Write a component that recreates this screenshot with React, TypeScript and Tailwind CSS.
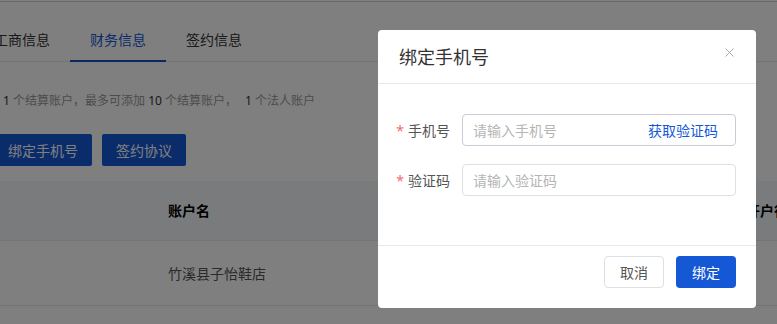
import { X } from 'lucide-react';

const font = { fontFamily: '"Noto Sans", "Noto Sans CJK SC", sans-serif' };

function Page() {
  return (
    <div className="w-[777px] h-[324px] bg-white overflow-hidden">
      <div className="h-[2px] border-b border-gray-300" />
      <div className="-ml-[26px] flex border-b border-[#e8e8e8] h-[60px]">
        {['工商信息', '财务信息', '签约信息'].map((t, i) => (
          <div
            key={t}
            className={
              'px-5 h-[60px] pt-[28px] text-[14px] leading-[20px] border-b-2 ' +
              (i === 1 ? 'text-[#1558d6] border-[#1a4fc0]' : 'text-[#333] border-transparent')
            }
          >
            {t}
          </div>
        ))}
      </div>
      <div className="pl-[3px] mt-[30px] text-[12px] text-[#999] leading-[18px]">
        <span className="text-[#333]">1</span> 个结算账户，最多可添加 <span className="text-[#333]">10</span> 个结算账户，
        <span className="text-[#333] ml-2">1</span> 个法人账户
      </div>
      <div className="-ml-[6px] mt-[24px] flex gap-[10px]">
        <button className="h-[32px] px-[14px] rounded-[2px] bg-[#1558d6] text-white text-[14px]">绑定手机号</button>
        <button className="h-[32px] px-[14px] rounded-[2px] bg-[#1558d6] text-white text-[14px]">签约协议</button>
      </div>
      <div className="mt-[15px]">
        <div className="flex h-[60px] items-center bg-[#f5f6f8] border-b border-[#e8e8e8] text-[14px] font-bold text-black">
          <div className="w-[168px] shrink-0" />
          <div className="w-[578px] shrink-0">账户名</div>
          <div className="shrink-0 whitespace-nowrap">开户行</div>
        </div>
        <div className="flex h-[65px] items-center border-b border-[#e8e8e8] text-[14px] text-[#555]">
          <div className="w-[168px] shrink-0" />
          <div className="w-[578px] shrink-0">竹溪县子怡鞋店</div>
        </div>
      </div>
    </div>
  );
}

function Modal() {
  return (
    <div className="absolute left-[378px] top-[30px] w-[378px] h-[278px] bg-white rounded-[4px] flex flex-col">
      <div className="h-[54px] border-b border-[#e8e8e8] flex items-center justify-between pl-[21px] pr-[19px]">
        <span className="text-[18px] text-[#333] pt-[2px]">绑定手机号</span>
        <X className="w-[15px] h-[15px] text-[#999] -mt-[8px]" strokeWidth={1.3} />
      </div>
      <div className="flex-1 pt-[30px] pr-[20px] flex flex-col gap-[18px]">
        <div className="flex items-center">
          <label className="w-[84px] text-right pr-[12px] text-[14px] text-[#555]">
            <span className="text-[#f56c6c] mr-[4px]">*</span>手机号
          </label>
          <div className="flex-1 h-[32px] border border-[#c9cbd6] rounded-[4px] flex items-center pl-[10px] pr-[17px] text-[14px]">
            <span className="flex-1 text-[#b5b5b5]">请输入手机号</span>
            <span className="text-[#1558d6]">获取验证码</span>
          </div>
        </div>
        <div className="flex items-center">
          <label className="w-[84px] text-right pr-[12px] text-[14px] text-[#555]">
            <span className="text-[#f56c6c] mr-[4px]">*</span>验证码
          </label>
          <div className="flex-1 h-[32px] border border-[#dcdfe6] rounded-[4px] flex items-center pl-[10px] text-[14px]">
            <span className="text-[#b5b5b5]">请输入验证码</span>
          </div>
        </div>
      </div>
      <div className="h-[63px] border-t border-[#e8e8e8] flex items-start justify-end gap-[12px] pt-[10px] pr-[20px]">
        <button className="h-[32px] w-[60px] border border-[#dcdfe6] rounded-[4px] text-[14px] text-[#555]">取消</button>
        <button className="h-[32px] w-[60px] rounded-[4px] bg-[#1558d6] text-[14px] text-white">绑定</button>
      </div>
    </div>
  );
}

export default function App() {
  return (
    <div className="relative w-[777px] h-[324px] overflow-hidden" style={font}>
      <Page />
      <div className="absolute inset-0 bg-black/50" />
      <Modal />
    </div>
  );
}
